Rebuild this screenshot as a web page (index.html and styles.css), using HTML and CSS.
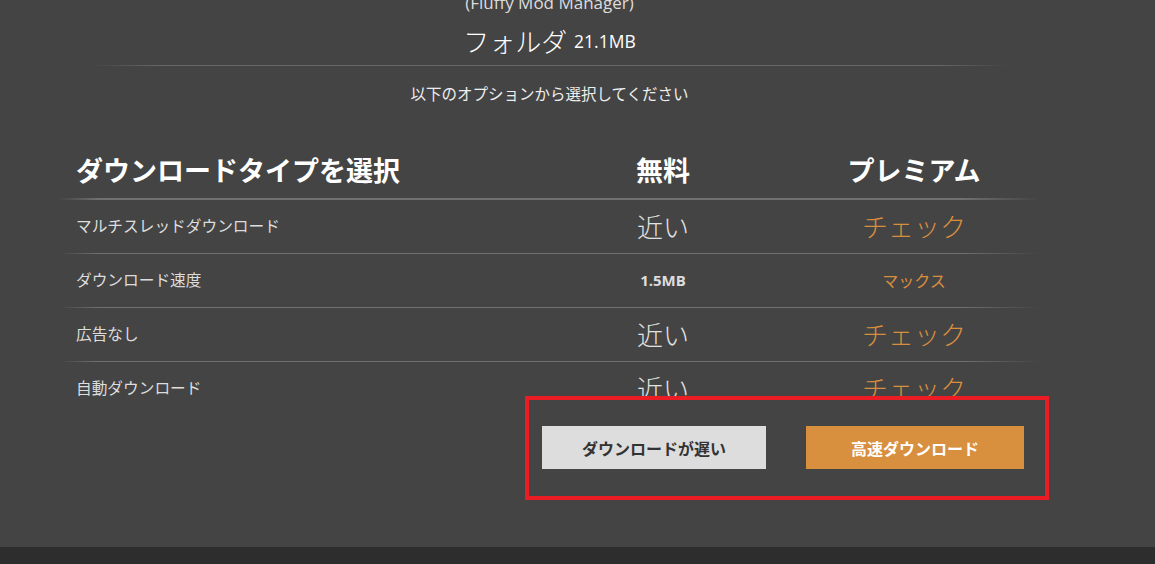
FILE: index.html
```html
<!DOCTYPE html>
<html lang="ja">
<head>
  <meta charset="UTF-8">
  <meta name="viewport" content="width=device-width, initial-scale=1.0">
  <title>フォルダ - ダウンロード</title>
  <link rel="stylesheet" href="styles.css">
</head>
<body>
  <div class="page">
    <div class="wrap">
      <div class="mod-name">(Fluffy Mod Manager)</div>
      <div class="folder">フォルダ <span class="size">21.1MB</span></div>
      <div class="sep"></div>
      <div class="subtitle">以下のオプションから選択してください</div>

      <div class="compare">
        <div class="row head-row">
          <div class="label">ダウンロードタイプを選択</div>
          <div class="free">無料</div>
          <div class="premium">プレミアム</div>
        </div>
        <div class="row">
          <div class="label">マルチスレッドダウンロード</div>
          <div class="free big">近い</div>
          <div class="premium big">チェック</div>
        </div>
        <div class="row">
          <div class="label">ダウンロード速度</div>
          <div class="free small">1.5MB</div>
          <div class="premium">マックス</div>
        </div>
        <div class="row">
          <div class="label">広告なし</div>
          <div class="free big">近い</div>
          <div class="premium big">チェック</div>
        </div>
        <div class="row last">
          <div class="label">自動ダウンロード</div>
          <div class="free big">近い</div>
          <div class="premium big">チェック</div>
        </div>
      </div>
    </div>

    <div class="actions">
      <button class="btn slow-btn">ダウンロードが遅い</button>
      <button class="btn fast-btn">高速ダウンロード</button>
    </div>
  </div>
  <div class="footer"></div>
</body>
</html>
```

FILE: styles.css
```css
body {
  margin: 0;
  padding: 0;
  background: #444444;
  color: #e6e6e6;
  font-family: "Open Sans", "Noto Sans CJK JP", sans-serif;
}

.page {
  position: relative;
  height: 547px;
  overflow: hidden;
}

.wrap {
  width: 979px;
  margin-left: 60px;
}

.mod-name {
  margin-top: -7px;
  font-size: 17px;
  line-height: 20px;
  text-align: center;
  color: #dcdcdc;
}

.folder {
  margin-top: 13px;
  font-size: 26px;
  line-height: 31px;
  text-align: center;
  color: #ffffff;
  font-weight: 300;
}

.folder .size {
  font-size: 17.5px;
  font-weight: 400;
  vertical-align: 4px;
}

.sep {
  margin: 7px 30px 0;
  height: 1px;
  background: linear-gradient(to right, transparent, #686868 8%, #686868 92%, transparent);
}

.subtitle {
  margin-top: 18px;
  font-size: 15.5px;
  line-height: 20px;
  text-align: center;
  color: #eeeeee;
}

.compare {
  margin-top: 46px;
}

.row {
  display: grid;
  grid-template-columns: 497px 212px 252px;
  align-items: center;
  height: 51px;
  padding-bottom: 2px;
  border-bottom: 1px solid #666;
  border-image: linear-gradient(to right, transparent, #707070 4%, #707070 92%, transparent) 1;
}

.row.last {
  border-bottom: none;
}

.head-row {
  height: 33px;
  padding-bottom: 15px;
  border-bottom-width: 2px;
  font-size: 27px;
  font-weight: 700;
  color: #ffffff;
}

.label {
  padding-left: 16px;
  font-size: 15.7px;
  color: #dddddd;
}

.head-row .label {
  font-size: 27px;
  color: #ffffff;
}

.free {
  text-align: center;
}

.premium {
  text-align: center;
  padding-left: 38px;
  color: #d98e3e;
  font-size: 16px;
}

.head-row .premium {
  color: #ffffff;
  font-size: 27px;
}

.big {
  font-size: 26px;
  font-weight: 300;
}

.free.big {
  color: #e2e2e2;
}

.small {
  font-size: 15px;
  font-weight: 700;
  color: #dddddd;
}

.actions {
  position: absolute;
  left: 525px;
  top: 396px;
  width: 524px;
  height: 104px;
  box-sizing: border-box;
  border: 4px solid #ec1c24;
  background: #444444;
  display: flex;
  gap: 40px;
  padding: 26px 0 0 13px;
}

.btn {
  height: 43px;
  border: none;
  border-radius: 0;
  font-family: "Noto Sans CJK JP", sans-serif;
  font-size: 16px;
  font-weight: 700;
  cursor: pointer;
}

.slow-btn {
  width: 224px;
  background: #dddddd;
  color: #333333;
}

.fast-btn {
  width: 218px;
  background: #d88f3e;
  color: #ffffff;
}

.footer {
  height: 17px;
  background: #2d2d2d;
}
```
